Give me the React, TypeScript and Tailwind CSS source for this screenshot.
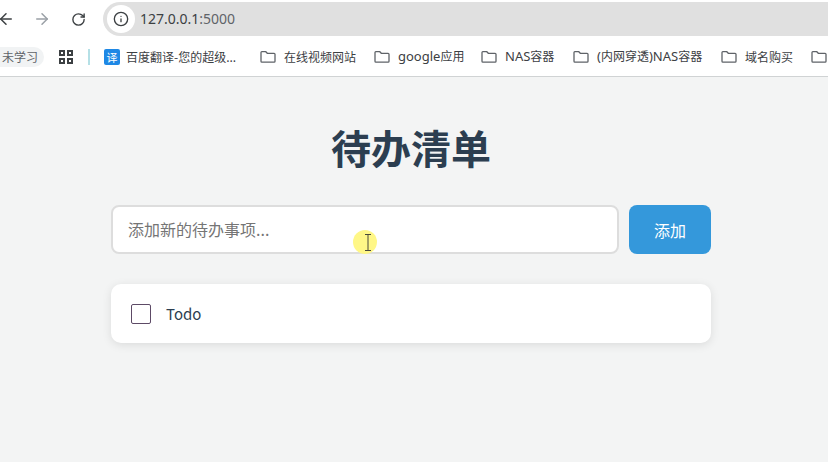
import React from 'react';
import { ArrowLeft, ArrowRight, RotateCw, Info } from 'lucide-react';

const cjk = 'font-["Noto_Sans_CJK_SC","Noto_Sans",sans-serif]';

const FolderIcon = () => (
  <svg width="16" height="16" viewBox="0 0 16 16" fill="none" stroke="#5f6368" strokeWidth="1.3" className="shrink-0">
    <path d="M1 3.6c0-.5.4-.9.9-.9h3.9l1.5 1.6h6.8c.5 0 .9.4.9.9v7.1c0 .5-.4.9-.9.9H1.9c-.5 0-.9-.4-.9-.9z" />
  </svg>
);

const Latin = ({ children }: { children: React.ReactNode }) => (
  <span className="text-[13px] font-['Noto_Sans',sans-serif]">{children}</span>
);

const bookmarks = [
  { key: 'video', label: <>在线视频网站</>, width: 'w-[72px]' },
  { key: 'google', label: <><Latin>google</Latin>应用</>, width: 'w-[65px]' },
  { key: 'nas', label: <><Latin>NAS</Latin>容器</>, width: 'w-[50px]' },
  { key: 'nat', label: <><Latin>(</Latin>内网穿透<Latin>)NAS</Latin>容器</>, width: 'w-[106px]' },
  { key: 'domain', label: <>域名购买</>, width: 'w-[48px]' }
];

export default function App() {
  return (
    <div className={`relative w-[828px] h-[462px] overflow-hidden bg-[#f3f4f4] ${cjk}`}>
      {/* Browser toolbar */}
      <div className="h-[38px] bg-white flex items-center">
        <ArrowLeft className="w-[18px] h-[18px] text-[#3c4043] ml-[-3px] shrink-0" strokeWidth={2} />
        <ArrowRight className="w-[18px] h-[18px] text-[#9aa0a6] ml-[18px] shrink-0" strokeWidth={2} />
        <RotateCw className="w-[15px] h-[15px] text-[#3c4043] ml-[20px] shrink-0" strokeWidth={2.2} />
        <div className="ml-[17px] flex-1 h-[34px] bg-[#e0e0e0] rounded-l-full flex items-center pl-[4px]">
          <div className="w-[28px] h-[28px] rounded-full bg-white flex items-center justify-center">
            <Info className="w-[16px] h-[16px] text-[#3c4043]" strokeWidth={2} />
          </div>
          <span className="ml-[5px] text-[14px] leading-none text-[#3c4043] font-['Noto_Sans',sans-serif]">
            127.0.0.1<span className="text-[#5f6368]">:5000</span>
          </span>
        </div>
      </div>

      {/* Bookmarks bar */}
      <div className="h-[39px] bg-white border-b border-[#d0d3d4] flex items-center text-[12px] text-[#3c4043] whitespace-nowrap">
        <div className="w-[44px] h-[20px] rounded-r-[10px] bg-[#f1f3f4] flex items-center text-[12px] text-[#5f6368] pl-[2px]">未学习</div>
        <div className="ml-[15px] w-[14px] h-[14px] grid grid-cols-2 gap-[2px] shrink-0">
          <span className="border-[2px] border-[#3c4043]" />
          <span className="border-[2px] border-[#3c4043]" />
          <span className="border-[2px] border-[#3c4043]" />
          <span className="border-[2px] border-[#3c4043]" />
        </div>
        <div className="ml-[15px] w-[2px] h-[16px] bg-[#b5e0e6]" />
        <div className="ml-[14px] w-[16px] h-[16px] rounded-[2px] bg-[#1e88e5] text-white text-[11px] leading-[16px] text-center shrink-0">译</div>
        <span className="ml-[6px] w-[111px] mr-[23px] shrink-0">百度翻译-您的超级...</span>
        {bookmarks.map(b => (
          <React.Fragment key={b.key}>
            <FolderIcon />
            <span className={`ml-[8px] mr-[18px] shrink-0 ${b.width}`}>{b.label}</span>
          </React.Fragment>
        ))}
        <FolderIcon />
      </div>

      {/* Todo app */}
      <div className="w-[600px] ml-[111px]">
        <h1 className="text-[40px] leading-[48px] font-bold text-[#2c3e50] text-center mt-[46px]">待办清单</h1>
        <div className="flex gap-[10px] mt-[34px]">
          <input
            placeholder="添加新的待办事项..."
            className="flex-1 h-[49px] px-[15px] pb-[2px] bg-white border-2 border-[#dddddd] rounded-lg text-[16px] placeholder:text-[#757575] outline-none"
          />
          <button className="w-[82px] h-[49px] bg-[#3498db] text-white text-[16px] rounded-lg">添加</button>
        </div>
        <div className="mt-[30px] h-[59px] bg-white rounded-[10px] shadow-[0_2px_10px_rgba(0,0,0,0.1)] flex items-center pl-[20px]">
          <span className="w-[20px] h-[20px] rounded-[2px] border border-[#5d4a66] bg-white shrink-0" />
          <span className="ml-[15px] text-[15px] text-[#2c3e50] pt-px">Todo</span>
        </div>
      </div>

      {/* Recorded mouse highlight */}
      <div className="absolute left-[353px] top-[230px] w-[24px] h-[24px] rounded-full bg-[#fff787] flex items-center justify-center">
        <svg width="8" height="17" viewBox="0 0 8 17" fill="none" stroke="#4a4a3a" strokeWidth="1" className="ml-[5px]">
          <path d="M1 .5h6M4 .5v16M1 16.5h6" />
        </svg>
      </div>
    </div>
  );
}
